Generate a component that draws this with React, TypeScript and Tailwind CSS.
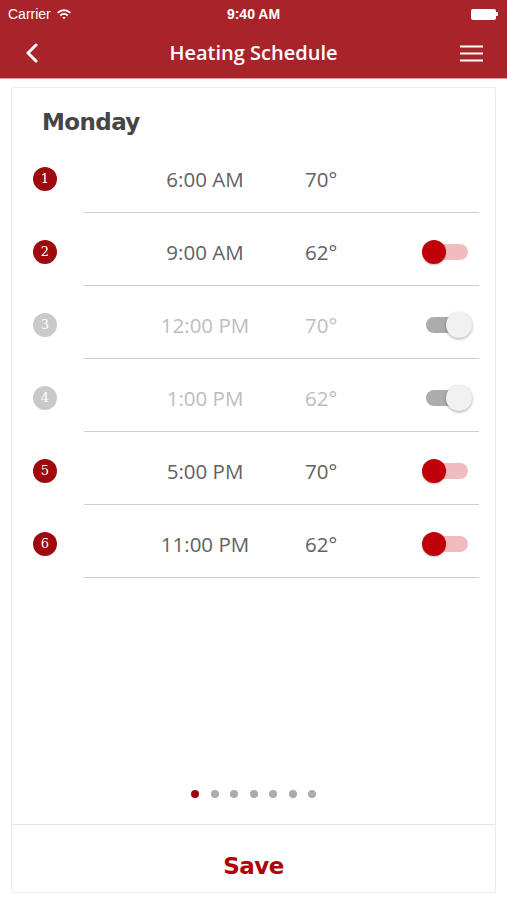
import React from "react";

type Row = { n: number; time: string; temp: string; state: "none" | "on" | "off" };

const rows: Row[] = [
  { n: 1, time: "6:00 AM", temp: "70°", state: "none" },
  { n: 2, time: "9:00 AM", temp: "62°", state: "on" },
  { n: 3, time: "12:00 PM", temp: "70°", state: "off" },
  { n: 4, time: "1:00 PM", temp: "62°", state: "off" },
  { n: 5, time: "5:00 PM", temp: "70°", state: "on" },
  { n: 6, time: "11:00 PM", temp: "62°", state: "on" },
];

function Toggle({ on }: { on: boolean }) {
  return (
    <div className="relative w-[50px] h-[26px]">
      {on ? (
        <>
          <div className="absolute left-[10px] top-[5px] w-[36px] h-[16px] rounded-full bg-[#f1bcc0]" />
          <div className="absolute left-0 top-[1px] w-[24px] h-[24px] rounded-full bg-[#c00008] shadow-[0_1px_2px_rgba(0,0,0,0.25)]" />
        </>
      ) : (
        <>
          <div className="absolute left-[4px] top-[5px] w-[36px] h-[16px] rounded-full bg-[#acacac]" />
          <div className="absolute right-0 top-0 w-[26px] h-[26px] rounded-full bg-[#f1f1f1] shadow-[0_1px_3px_rgba(0,0,0,0.35)]" />
        </>
      )}
    </div>
  );
}

export default function App() {
  const sans = { fontFamily: '"Liberation Sans", Arial, sans-serif' };
  return (
    <div className="w-[507px] h-[900px] bg-white overflow-hidden" style={sans}>
      <div className="bg-[#a8242a] border-b border-[#e09a9d]">
        <div className="h-[28px] relative flex items-center text-white text-[14px]">
          <div className="flex items-center pl-[8px] gap-[5px]">
            <span>Carrier</span>
            <svg width="16" height="12" viewBox="0 0 16 12">
              <path d="M1 4.2 A10 10 0 0 1 15 4.2 L13.6 5.6 A8 8 0 0 0 2.4 5.6 Z" fill="white" />
              <path d="M3.6 6.8 A6.3 6.3 0 0 1 12.4 6.8 L11 8.2 A4.3 4.3 0 0 0 5 8.2 Z" fill="white" />
              <path d="M6.3 9.5 A2.5 2.5 0 0 1 9.7 9.5 L8 11.3 Z" fill="white" />
            </svg>
          </div>
          <div className="absolute left-0 right-0 text-center font-semibold">9:40 AM</div>
          <div className="ml-auto mr-[9px] flex items-center">
            <div className="w-[25px] h-[11px] rounded-[2px] bg-white" />
            <div className="w-[2px] h-[4px] bg-white rounded-r-[1px]" />
          </div>
        </div>
        <div className="h-[50px] relative flex items-center">
          <svg className="ml-[25px]" width="14" height="20" viewBox="0 0 14 20">
            <path d="M11 2 L3 10 L11 18" stroke="white" strokeWidth="3" fill="none" strokeLinecap="round" strokeLinejoin="round" />
          </svg>
          <div className="absolute left-0 right-0 text-center text-white text-[20px] font-semibold" style={{ fontFamily: '"Open Sans", sans-serif' }}>
            Heating Schedule
          </div>
          <svg className="ml-auto mr-[24px]" width="23" height="17" viewBox="0 0 23 17">
            <path d="M0 1.5 H23 M0 8.5 H23 M0 15.5 H23" stroke="white" strokeWidth="2.2" />
          </svg>
        </div>
      </div>
      <div className="px-[11px] pt-[8px]">
        <div className="h-[806px] border border-[#ececec] rounded-[2px] flex flex-col">
          <div className="h-[52px] pt-[20px] pl-[30px]">
            <div className="text-[23px] leading-[28px] font-bold text-[#454545] tracking-[-0.6px]" style={{ fontFamily: '"DejaVu Sans", Verdana, sans-serif' }}>
              Monday
            </div>
          </div>
          {rows.map((r) => {
            const dim = r.state === "off";
            return (
              <div key={r.n}>
                <div className="h-[72px] pt-[6px] flex items-center">
                  <div
                    className={`ml-[21px] w-[24px] h-[24px] rounded-full flex items-center justify-center text-white text-[13px] ${dim ? "bg-[#c9c9c9]" : "bg-[#9e0a0e]"}`}
                    style={{ fontFamily: '"DejaVu Serif", serif' }}
                  >
                    {r.n}
                  </div>
                  <div className={`ml-[87px] w-[122px] text-center text-[20.5px] ${dim ? "text-[#bdbdbd]" : "text-[#626262]"}`} style={{ fontFamily: '"Open Sans", sans-serif' }}>
                    {r.time}
                  </div>
                  <div className={`ml-[39px] text-[20.5px] ${dim ? "text-[#bdbdbd]" : "text-[#626262]"}`} style={{ fontFamily: '"Open Sans", sans-serif' }}>
                    {r.temp}
                  </div>
                  <div className="flex-1" />
                  {r.state !== "none" && (
                    <div className="mr-[23px]">
                      <Toggle on={r.state === "on"} />
                    </div>
                  )}
                </div>
                <div className="ml-[72px] mr-[16px] h-[1px] bg-[#cfcfcf]" />
              </div>
            );
          })}
          <div className="flex-1" />
          <div className="flex justify-center gap-[11.5px] mb-[26px]">
            {[0, 1, 2, 3, 4, 5, 6].map((i) => (
              <div key={i} className={`w-[8px] h-[8px] rounded-full ${i === 0 ? "bg-[#a00008]" : "bg-[#ababab]"}`} />
            ))}
          </div>
          <div className="h-[1px] bg-[#e6e6e6]" />
          <div className="h-[67px] flex items-center justify-center pt-[15px]">
            <span className="text-[23px] font-bold text-[#b0000a] tracking-[-0.6px]" style={{ fontFamily: '"DejaVu Sans", Verdana, sans-serif' }}>
              Save
            </span>
          </div>
        </div>
      </div>
    </div>
  );
}
